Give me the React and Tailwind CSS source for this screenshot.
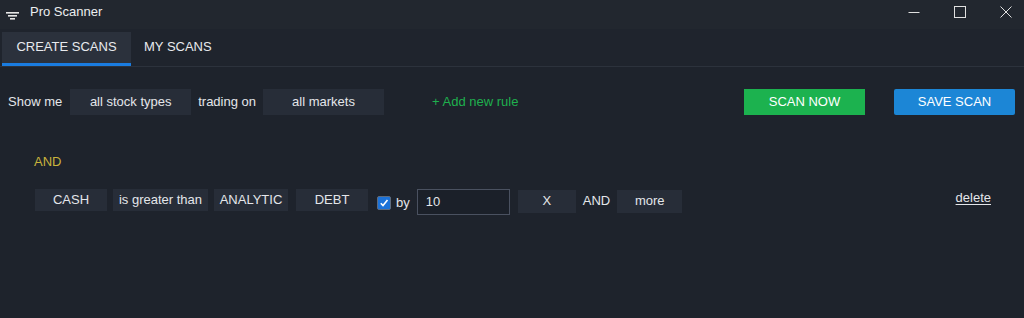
import React from "react";

const Box = ({ children, className = "" }) => (
  <div className={"flex items-center justify-center bg-[#272d38] " + className}>{children}</div>
);

export default function App() {
  return (
    <div className="w-[1024px] h-[318px] bg-[#1e232c] text-[#e4e6ea] text-[13px] flex flex-col overflow-hidden" style={{ fontFamily: '"Liberation Sans", Arial, sans-serif' }}>
      {/* title bar */}
      <div className="h-[29px] flex items-center bg-[#22272f] shrink-0">
        <svg width="14" height="12" viewBox="0 0 14 12" className="ml-[6px] mt-[2px]">
          <rect x="0" y="2" width="13" height="1.6" fill="#e6e6e6" />
          <rect x="2" y="5" width="9" height="1.6" fill="#e6e6e6" />
          <rect x="4" y="8" width="5" height="1.6" fill="#e6e6e6" />
        </svg>
        <span className="ml-[10px] mb-[5px] text-[#eceef0]">Pro Scanner</span>
        <div className="ml-auto flex items-center h-full mb-[5px] -mr-[5px]">
          <div className="w-[46px] flex justify-center">
            <svg width="12" height="12" viewBox="0 0 12 12"><path d="M0.5 6.5H11.5" stroke="#e0e0e0" strokeWidth="1" /></svg>
          </div>
          <div className="w-[46px] flex justify-center">
            <svg width="12" height="12" viewBox="0 0 12 12"><rect x="0.5" y="0.5" width="11" height="11" fill="none" stroke="#e0e0e0" strokeWidth="1" /></svg>
          </div>
          <div className="w-[46px] flex justify-center">
            <svg width="12" height="12" viewBox="0 0 12 12"><path d="M0.5 0.5L11.5 11.5M11.5 0.5L0.5 11.5" stroke="#e0e0e0" strokeWidth="1" /></svg>
          </div>
        </div>
      </div>
      {/* tabs */}
      <div className="h-[38px] flex items-end pl-[2px] border-b border-[#2c323c] shrink-0 bg-[#1f242d]">
        <div className="h-[34px] w-[129px] bg-[#2b313c] border-b-[3px] border-[#1a7ce0] flex items-center justify-center text-[#e8eaee] pb-[1px]">CREATE SCANS</div>
        <div className="h-[34px] px-[13px] flex items-center justify-center text-[#e8eaee] pb-[4px]">MY SCANS</div>
      </div>
      {/* row 1 */}
      <div className="flex items-center mt-[22px] pl-[8px] h-[26px]">
        <span>Show me</span>
        <Box className="ml-[8px] w-[121px] h-[26px]">all stock types</Box>
        <span className="ml-[7px]">trading on</span>
        <Box className="ml-[7px] w-[121px] h-[26px]">all markets</Box>
        <span className="ml-[48px] text-[#1fb04e]">+ Add new rule</span>
        <div className="ml-auto flex items-center gap-[29px] mr-[9px]">
          <div className="w-[121px] h-[26px] bg-[#1cb24f] flex items-center justify-center text-white">SCAN NOW</div>
          <div className="w-[121px] h-[26px] bg-[#1c86d6] rounded-[2px] flex items-center justify-center text-white">SAVE SCAN</div>
        </div>
      </div>
      {/* AND */}
      <div className="mt-[39px] pl-[34px] text-[#c9b43c] leading-[16px]">AND</div>
      {/* row 2 */}
      <div className="flex items-center mt-[17px] pl-[35px] h-[26px]">
        <Box className="w-[72px] h-[22px]">CASH</Box>
        <Box className="ml-[6px] w-[95px] h-[22px]">is greater than</Box>
        <Box className="ml-[6px] w-[74px] h-[22px]">ANALYTIC</Box>
        <Box className="ml-[8px] w-[72px] h-[22px]">DEBT</Box>
        <div className="ml-[9px] w-[14px] h-[14px] bg-[#1c72d8] border border-[#5e6b7d] rounded-[2px] flex items-center justify-center mt-[6px]">
          <svg width="10" height="10" viewBox="0 0 10 10"><path d="M1.8 5.2L4 7.5L8.5 2" fill="none" stroke="white" strokeWidth="1.6" /></svg>
        </div>
        <span className="ml-[5px] mt-[6px]">by</span>
        <div className="ml-[7px] w-[93px] h-[26px] border border-[#4a5160] bg-[#1b2029] flex items-center pl-[8px] mt-[3px]">10</div>
        <Box className="ml-[8px] w-[58px] h-[23px] mt-[2px]">X</Box>
        <span className="ml-[7px] mt-[2px]">AND</span>
        <Box className="ml-[7px] w-[65px] h-[23px] mt-[2px]">more</Box>
        <span className="ml-auto mr-[33px] underline underline-offset-2 mb-[4px]">delete</span>
      </div>
    </div>
  );
}
